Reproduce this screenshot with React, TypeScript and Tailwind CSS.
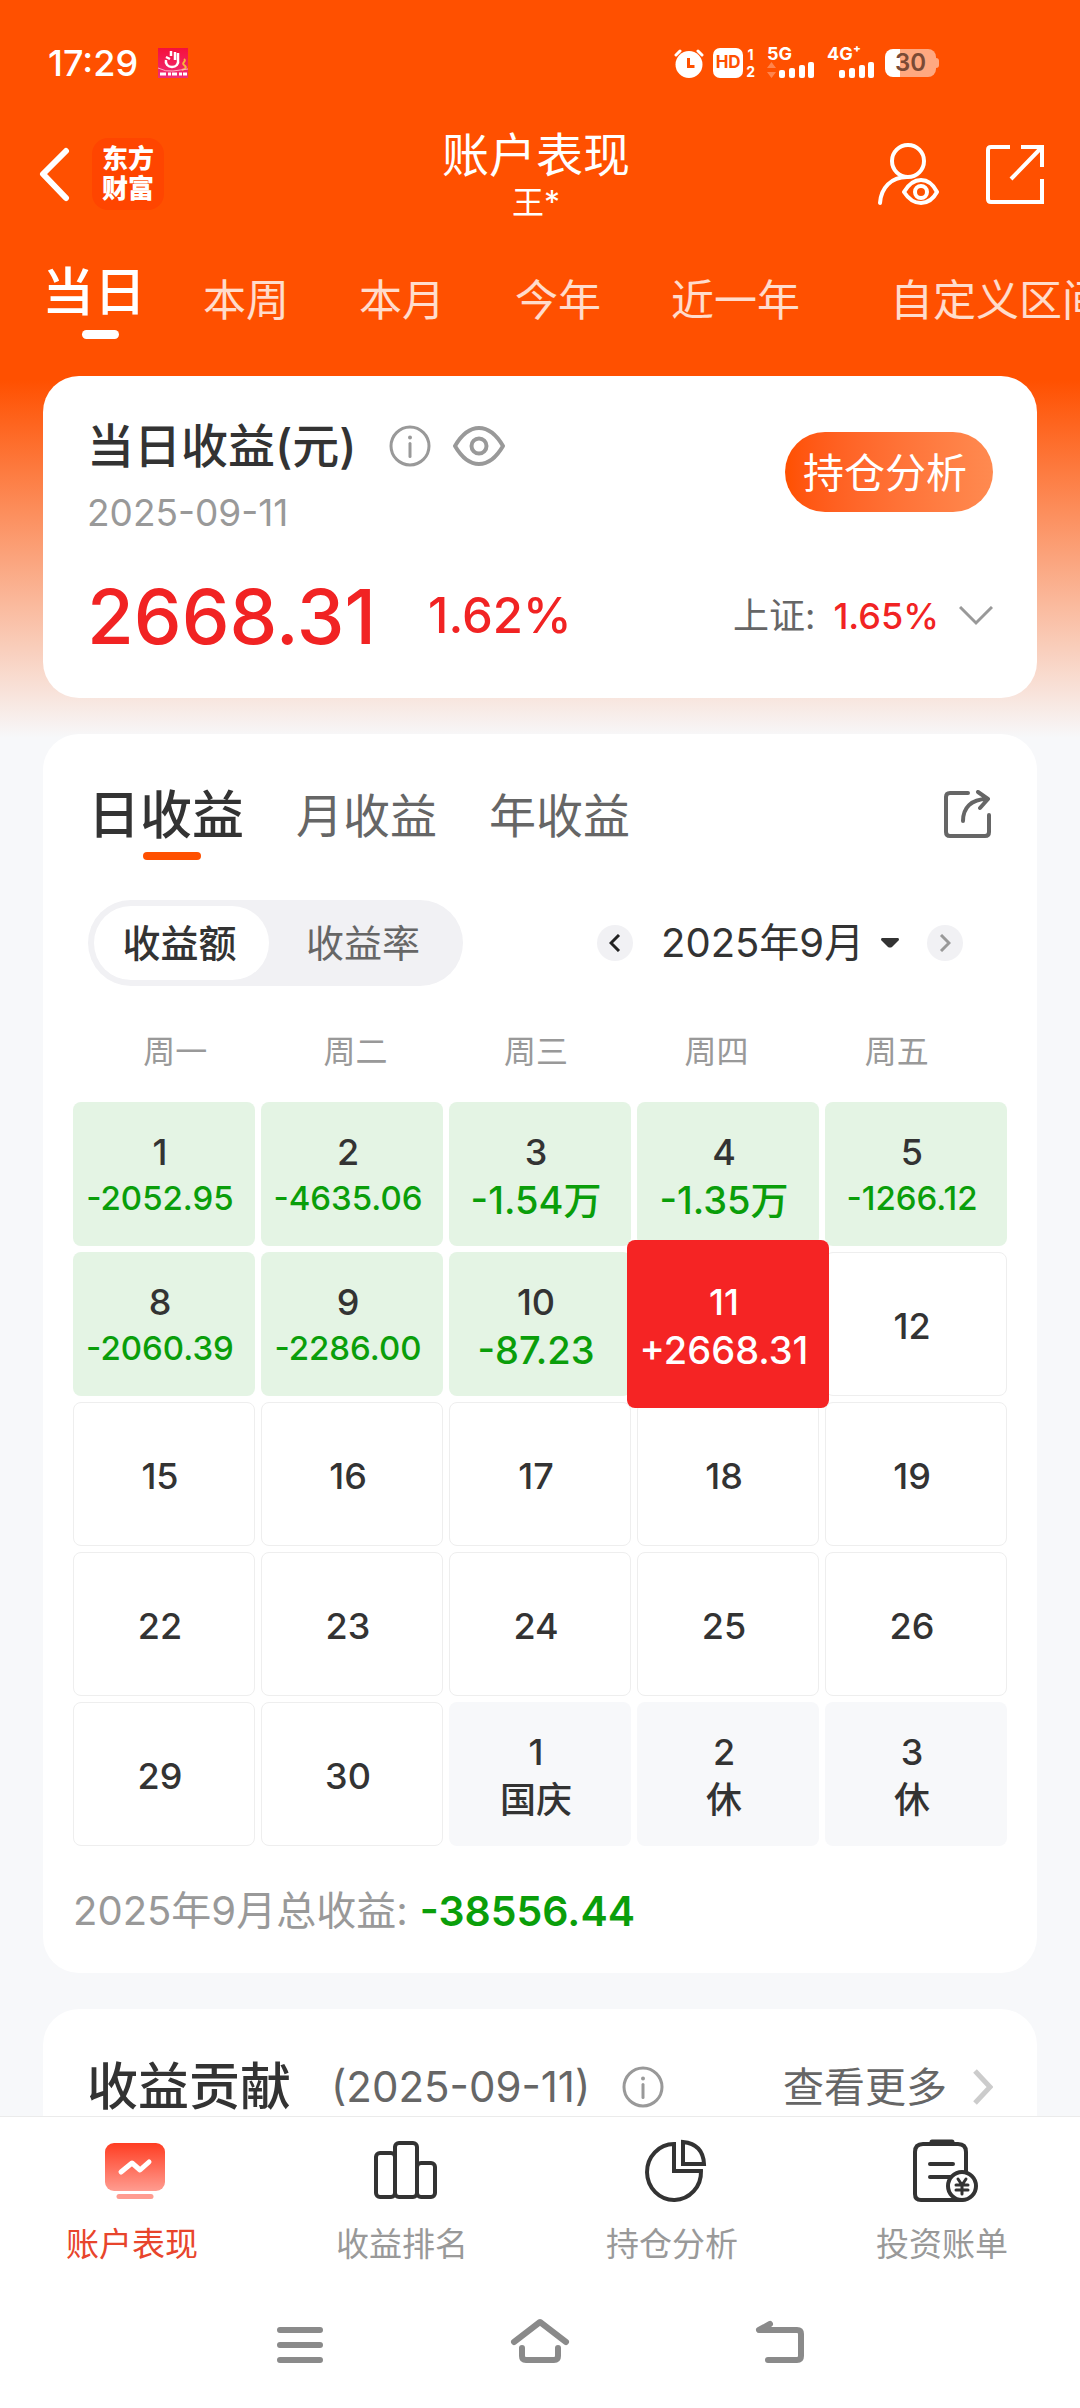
import { useState } from 'react';
import type { ReactNode } from 'react';
import clsx from 'clsx';

const ranges = ['当日', '本周', '本月', '今年', '近一年', '自定义区间'];
const periods = ['日收益', '月收益', '年收益'];
const weekdays = ['周一', '周二', '周三', '周四', '周五'];
const months = ['2025年9月', '2025年8月', '2025年7月'];

interface Day {
  id: string;
  day: number;
  value?: string;
  type: 'loss' | 'gain' | 'empty' | 'holiday';
}

const days: Day[] = [
  { id: '09-01', day: 1, value: '-2052.95', type: 'loss' },
  { id: '09-02', day: 2, value: '-4635.06', type: 'loss' },
  { id: '09-03', day: 3, value: '-1.54万', type: 'loss' },
  { id: '09-04', day: 4, value: '-1.35万', type: 'loss' },
  { id: '09-05', day: 5, value: '-1266.12', type: 'loss' },
  { id: '09-08', day: 8, value: '-2060.39', type: 'loss' },
  { id: '09-09', day: 9, value: '-2286.00', type: 'loss' },
  { id: '09-10', day: 10, value: '-87.23', type: 'loss' },
  { id: '09-11', day: 11, value: '+2668.31', type: 'gain' },
  { id: '09-12', day: 12, type: 'empty' },
  { id: '09-15', day: 15, type: 'empty' },
  { id: '09-16', day: 16, type: 'empty' },
  { id: '09-17', day: 17, type: 'empty' },
  { id: '09-18', day: 18, type: 'empty' },
  { id: '09-19', day: 19, type: 'empty' },
  { id: '09-22', day: 22, type: 'empty' },
  { id: '09-23', day: 23, type: 'empty' },
  { id: '09-24', day: 24, type: 'empty' },
  { id: '09-25', day: 25, type: 'empty' },
  { id: '09-26', day: 26, type: 'empty' },
  { id: '09-29', day: 29, type: 'empty' },
  { id: '09-30', day: 30, type: 'empty' },
  { id: '10-01', day: 1, value: '国庆', type: 'holiday' },
  { id: '10-02', day: 2, value: '休', type: 'holiday' },
  { id: '10-03', day: 3, value: '休', type: 'holiday' },
];

function InfoIcon() {
  return (
    <svg width="42" height="42" viewBox="0 0 42 42" fill="none" stroke="#999" strokeWidth="3">
      <circle cx="21" cy="21" r="19" />
      <path d="M21 18.5v13" strokeLinecap="round" />
      <circle cx="21" cy="12.5" r="2" fill="#999" stroke="none" />
    </svg>
  );
}

function Signal({ label, arrows }: { label: string; arrows?: boolean }) {
  return (
    <div className="flex w-12 flex-col">
      <span className="text-[18px] leading-[14px] font-bold">{label}</span>
      <svg width="48" height="18" viewBox="0 0 48 18" fill="#fff">
        {arrows && <path d="M0 7l4.500-6 4.500 6zM0 11h9l-4.500 6z" opacity=".3" />}
        <rect x="12" y="9" width="6" height="8" rx="2" />
        <rect x="22" y="7" width="6" height="10" rx="2" />
        <rect x="32" y="4" width="6" height="13" rx="2" />
        <rect x="41" y="1" width="6" height="16" rx="2" />
      </svg>
    </div>
  );
}

function StatusBar() {
  return (
    <div className="flex h-[126px] items-center pr-[141px] pl-12">
      <span className="text-[36px] leading-[40px] font-medium">17:29</span>
      <svg className="ml-5" width="30" height="30" viewBox="0 0 30 30">
        <defs>
          <linearGradient id="promo" x1="0" y1="0" x2="0" y2="1">
            <stop offset="0" stopColor="#f5103c" />
            <stop offset="1" stopColor="#f02d78" />
          </linearGradient>
        </defs>
        <rect width="30" height="30" fill="url(#promo)" />
        <path d="M8 12c-1 4 2 7 6 7s7-3 6-7V5M17 12V4M13 8V3M8 9l4 2" fill="none" stroke="#fff" strokeWidth="2.500" />
        <path d="M26 11c3 2-3 4 0 6s2 4-2 5" fill="none" stroke="#f6b53c" strokeWidth="2" />
        <path d="M0 20q8 4 15 3t15-2" fill="none" stroke="#ffb0c0" strokeWidth="1" />
        <path d="M2 26h6M10 26h3M14 26h5M21 26h3M25 26h4" stroke="#fff" strokeWidth="3" />
      </svg>
      <div className="ml-auto flex items-center">
        <svg width="30" height="30" viewBox="0 0 30 30" fill="none">
          <circle cx="15" cy="16.500" r="13.500" fill="#fff" />
          <path d="M2 7l4-4M28 7l-4-4" stroke="#fff" strokeWidth="3" strokeLinecap="round" />
          <path d="M14.500 10v8.500h6" stroke="#ff5000" strokeWidth="3" />
        </svg>
        <span className="ml-[9px] flex h-[30px] w-[30px] items-center justify-center rounded-[7px] bg-white text-[17px] font-bold text-[#ff5000]">
          HD
        </span>
        <span className="ml-[3px] flex flex-col text-center text-[14px] leading-[17px] font-bold">
          <span>1</span>
          <span>2</span>
        </span>
        <div className="ml-3 flex gap-3">
          <Signal label="5G" arrows />
          <Signal label="4G⁺" />
        </div>
        <div className="ml-[10px] flex items-center">
          <span className="flex h-7 w-[51px] items-center justify-center rounded-[8px] bg-linear-to-r from-white from-30% to-[#ffa880] to-30% text-[24px] font-semibold text-[#7a4a35]">
            30
          </span>
          <span className="h-[10px] w-[3px] rounded-r-sm bg-[#ffa880]" />
        </div>
      </div>
    </div>
  );
}

function Header() {
  return (
    <header className="grid h-24 grid-cols-[1fr_auto_1fr] items-center px-9">
      <div className="flex items-center">
        <button aria-label="返回">
          <svg width="36" height="56" viewBox="0 0 36 56" fill="none" stroke="#fff" strokeWidth="6" strokeLinecap="round" strokeLinejoin="round">
            <path d="M30 5L7 28l23 24" />
          </svg>
        </button>
        <div className="ml-5 flex h-[72px] w-[72px] flex-col items-center justify-center rounded-2xl bg-[#ff4500] text-[26px] leading-[30px] font-black">
          <span>东方</span>
          <span>财富</span>
        </div>
      </div>
      <div className="flex flex-col items-center pr-2">
        <h1 className="text-[47px] leading-[58px]">账户表现</h1>
        <span className="text-[32px] leading-[38px]">王*</span>
      </div>
      <div className="flex items-center justify-end gap-[47px]">
        <button aria-label="账户可见">
          <svg width="62" height="62" viewBox="0 0 62 62" fill="none" stroke="#fff" strokeWidth="4" strokeLinecap="round">
            <circle cx="31" cy="18" r="16" />
            <path d="M3 60c1-15 11-26 27-26" />
            <path d="M27 49q7-12 17-12t16 12q-6 11-16 11T27 49z" strokeLinejoin="round" />
            <circle cx="44" cy="49" r="6" />
          </svg>
        </button>
        <button aria-label="分享">
          <svg width="58" height="60" viewBox="0 0 58 60" fill="none" stroke="#fff" strokeWidth="4">
            <path d="M24 3H5q-3 0-3 3v49q0 3 3 3h51V35M35 3h21v20M56 3L25 35" />
          </svg>
        </button>
      </div>
    </header>
  );
}

function RangeTabs() {
  const [active, setActive] = useState(0);

  return (
    <nav className="flex h-[154px] items-start overflow-hidden pt-9 pl-[42px] whitespace-nowrap">
      {ranges.map((r, i) => (
        <button
          key={r}
          onClick={() => setActive(i)}
          className={clsx(
            'shrink-0',
            active === i
              ? 'mr-[22px] flex flex-col items-center text-[52px] leading-[70px] font-medium'
              : 'px-[35px] text-[43px] leading-[84px] text-white/80',
            i === ranges.length - 1 && 'ml-5',
          )}
        >
          {r}
          {active === i && <span className="mt-[2px] ml-3 h-[9px] w-[37px] rounded-full bg-white" />}
        </button>
      ))}
    </nav>
  );
}

function SummaryCard() {
  return (
    <section className="rounded-[36px] bg-white px-11 pt-9 pb-3">
      <div className="flex items-start justify-between">
        <div>
          <div className="flex items-center">
            <h2 className="text-[47px] leading-[68px] font-medium text-[#333]">当日收益(元)</h2>
            <button aria-label="说明" className="ml-8">
              <InfoIcon />
            </button>
            <button aria-label="隐藏金额" className="ml-[22px]">
              <svg width="52" height="42" viewBox="0 0 52 42" fill="none" stroke="#999" strokeWidth="4">
                <path d="M2 21C9 9 17 3 26 3s17 6 24 18c-7 12-15 18-24 18S9 33 2 21z" strokeLinejoin="round" />
                <circle cx="26" cy="21" r="7.500" />
              </svg>
            </button>
          </div>
          <div className="text-[37px] leading-[66px] text-[#999]">2025-09-11</div>
        </div>
        <button className="mt-5 h-20 w-52 rounded-full bg-linear-to-r from-[#ff5000] to-[#ff8a50] pt-1 pr-2 text-[41px]">
          持仓分析
        </button>
      </div>
      <div className="flex h-[140px] items-center text-[#f12323]">
        <span className="text-[76px] leading-[96px] font-medium">2668.31</span>
        <span className="ml-[52px] text-[49px] font-medium">1.62%</span>
        <button className="ml-auto flex items-center text-[36px]">
          <span className="text-[#666]">上证:</span>
          <span className="ml-[18px] font-medium">1.65%</span>
          <svg className="ml-5" width="34" height="20" viewBox="0 0 34 20" fill="none" stroke="#999" strokeWidth="3">
            <path d="M1 1l16 16L33 1" />
          </svg>
        </button>
      </div>
    </section>
  );
}

function DayCell({ item }: { item: Day }) {
  const long = item.type === 'loss' && (item.value?.length ?? 0) > 7;

  return (
    <button
      className={clsx(
        'flex flex-col items-center justify-center rounded-[8px] pt-1 pr-2 font-medium whitespace-nowrap',
        item.type === 'loss' && 'bg-[#e4f4e4]',
        item.type === 'gain' && 'z-10 -mx-[10px] -my-3 bg-[#f52424] text-white',
        item.type === 'empty' && 'border border-[#eee]',
        item.type === 'holiday' && 'bg-[#f7f8fa]',
      )}
    >
      <span className={clsx('text-[36px]', long ? 'leading-[44px]' : 'leading-[48px]')}>{item.day}</span>
      {item.value && (
        <span
          className={clsx(
            'leading-[48px]',
            item.type === 'holiday' ? 'text-[36px]' : long ? 'text-[33px]' : 'text-[38px]',
            item.type === 'loss' && 'text-[#0a9e0a]',
          )}
        >
          {item.value}
        </span>
      )}
    </button>
  );
}

function CalendarCard() {
  const [period, setPeriod] = useState(0);
  const [mode, setMode] = useState<'amount' | 'rate'>('amount');
  const [month, setMonth] = useState(months[0]);

  return (
    <section className="rounded-[36px] bg-white px-[30px] pt-12 pb-[29px]">
      <div className="flex h-[78px] items-start gap-[52px] pr-4 pl-[15px]">
        {periods.map((p, i) => (
          <button
            key={p}
            onClick={() => setPeriod(i)}
            className={clsx(
              'flex flex-col items-center leading-[68px]',
              period === i ? 'text-[52px] font-medium text-[#333]' : 'text-[47px] text-[#666]',
            )}
          >
            {p}
            {period === i && <span className="mt-[2px] ml-3 h-2 w-[58px] rounded-full bg-[#ff5000]" />}
          </button>
        ))}
        <button aria-label="分享收益" className="mt-2 ml-auto">
          <svg width="48" height="48" viewBox="0 0 48 48" fill="none" stroke="#666" strokeWidth="4" strokeLinecap="round">
            <path d="M25 3H7q-4 0-4 4v35q0 4 4 4h35q4 0 4-4V25" />
            <path d="M20 31C20 18 28 9 44 9M35 2l10 7-8 9" strokeLinejoin="round" />
          </svg>
        </button>
      </div>

      <div className="mt-10 flex items-center justify-between pr-11 pl-[15px]">
        <div className="flex h-[86px] w-[375px] rounded-full bg-[#f1f1f4] p-[6px] text-[38px]">
          <button
            onClick={() => setMode('amount')}
            className={clsx(
              'w-[175px] rounded-full pr-1',
              mode === 'amount' ? 'bg-white font-medium text-[#333]' : 'text-[#666]',
            )}
          >
            收益额
          </button>
          <button
            onClick={() => setMode('rate')}
            className={clsx(
              'flex-1 rounded-full',
              mode === 'rate' ? 'bg-white font-medium text-[#333]' : 'text-[#666]',
            )}
          >
            收益率
          </button>
        </div>
        <div className="flex items-center">
          <button aria-label="上个月" className="flex h-9 w-9 items-center justify-center rounded-full bg-[#f1f1f4]">
            <svg width="12" height="18" viewBox="0 0 12 18" fill="none" stroke="#222" strokeWidth="3">
              <path d="M10 1L2 9l8 8" />
            </svg>
          </button>
          <label className="ml-7 flex items-center">
            <select
              aria-label="月份"
              value={month}
              onChange={(e) => setMonth(e.target.value)}
              className="appearance-none bg-transparent text-[40px] leading-[60px] text-[#333]"
            >
              {months.map((m) => (
                <option key={m}>{m}</option>
              ))}
            </select>
            <svg className="pointer-events-none ml-4" width="18" height="10" viewBox="0 0 18 10" fill="#333">
              <path d="M1 0h16q1 0 1 2l-7 7q-2 1-4 0L0 2q0-2 1-2z" />
            </svg>
          </label>
          <button aria-label="下个月" className="ml-7 flex h-9 w-9 items-center justify-center rounded-full bg-[#f1f1f4]">
            <svg width="12" height="18" viewBox="0 0 12 18" fill="none" stroke="#999" strokeWidth="3">
              <path d="M2 1l8 8-8 8" />
            </svg>
          </button>
        </div>
      </div>

      <div className="mt-9 mr-5 ml-3 grid grid-cols-5 text-center text-[32px] leading-[60px] text-[#999]">
        {weekdays.map((w) => (
          <span key={w}>{w}</span>
        ))}
      </div>

      <div className="mt-5 grid auto-rows-[144px] grid-cols-5 gap-[6px] text-[#333]">
        {days.map((d) => (
          <DayCell key={d.id} item={d} />
        ))}
      </div>

      <div className="mt-8 flex items-center text-[40px] leading-[66px] text-[#999]">
        <span>{month}总收益:</span>
        <span className="ml-3 text-[41px] font-semibold text-[#0a9e0a]">-38556.44</span>
      </div>
    </section>
  );
}

function ContributionCard() {
  return (
    <section className="flex h-[300px] items-start rounded-t-[36px] bg-white px-11 pt-11">
      <div className="flex flex-1 items-center leading-[68px]">
        <h2 className="text-[51px] font-medium text-[#333]">收益贡献</h2>
        <span className="ml-10 text-[42px] text-[#666]">(2025-09-11)</span>
        <button aria-label="说明" className="ml-8">
          <InfoIcon />
        </button>
        <a href="#more" className="ml-auto flex items-center text-[41px] text-[#666]">
          查看更多
          <svg className="ml-[26px]" width="20" height="36" viewBox="0 0 20 36" fill="none" stroke="#ccc" strokeWidth="5">
            <path d="M2 2l15 16L2 34" />
          </svg>
        </a>
      </div>
    </section>
  );
}

function NavItem({ label, active, children }: { label: string; active?: boolean; children: ReactNode }) {
  return (
    <a href="#" className="flex flex-col items-center">
      <svg width="66" height="66" viewBox="0 0 66 66" fill="none" stroke="#333" strokeWidth="4" strokeLinejoin="round" strokeLinecap="round">
        {children}
      </svg>
      <span className={clsx('mt-4 pr-[6px] text-[33px] leading-[48px]', active ? 'text-[#e8452c]' : 'text-[#999]')}>
        {label}
      </span>
    </a>
  );
}

function BottomNav() {
  return (
    <nav className="grid grid-cols-4 pt-[21px]">
      <NavItem label="账户表现" active>
        <defs>
          <linearGradient id="screen" x1="0" y1="0" x2="0" y2="1">
            <stop offset="0" stopColor="#ff3d22" />
            <stop offset="1" stopColor="#ff9c90" />
          </linearGradient>
        </defs>
        <rect x="3" y="5" width="60" height="48" rx="9" fill="url(#screen)" stroke="none" />
        <path d="M19 34l11-9 8 7 9-8" stroke="#fff" strokeWidth="5" />
        <path d="M17 58.500h32" stroke="#ff9c90" strokeWidth="5" />
      </NavItem>
      <NavItem label="收益排名">
        <rect x="4" y="15" width="19" height="44" rx="4" />
        <rect x="23" y="5" width="22" height="54" rx="4" />
        <rect x="45" y="25" width="18" height="34" rx="4" />
      </NavItem>
      <NavItem label="持仓分析">
        <path d="M32 6A27 28 0 1 0 59 33H32z" strokeLinejoin="miter" />
        <path d="M41 4v22h21Q61 6 41 4z" strokeLinejoin="miter" />
      </NavItem>
      <NavItem label="投资账单">
        <path d="M54 33V14q0-8-8-8H11q-8 0-8 8v42q0 6 6 6h41" />
        <path d="M20 4h20" strokeWidth="5" />
        <path d="M18 26h23M18 39h20" />
        <circle cx="50" cy="48" r="14" fill="#fff" />
        <path d="M46 41l4 6 4-6M50 47v9M44 47h12M44 52h12" strokeWidth="3" />
      </NavItem>
    </nav>
  );
}

function SystemNav() {
  return (
    <div className="mx-auto grid max-w-[720px] grid-cols-3 justify-items-center pt-[46px] pb-[38px]">
      <button aria-label="最近任务">
        <svg width="60" height="56" viewBox="0 0 60 56" stroke="#8a8a8a" strokeWidth="6" strokeLinecap="round">
          <path d="M10 16h40M10 31h40M10 46h40" />
        </svg>
      </button>
      <button aria-label="主屏幕">
        <svg width="60" height="56" viewBox="0 0 60 56" fill="none" stroke="#8a8a8a" strokeWidth="6" strokeLinecap="round" strokeLinejoin="round">
          <path d="M4 28L30 8l26 20M12 34v8q0 4 4 4h28q4 0 4-4v-8" />
        </svg>
      </button>
      <button aria-label="后退">
        <svg width="60" height="56" viewBox="0 0 60 56" fill="none" stroke="#8a8a8a" strokeWidth="6" strokeLinecap="round" strokeLinejoin="round">
          <path d="M20 10L9 16h38q4 0 4 4v22q0 4-4 4H18" />
        </svg>
      </button>
    </div>
  );
}

export default function App() {
  return (
    <div className="flex h-screen flex-col bg-[#f7f8fa] font-['Inter','Noto_Sans_CJK_SC',sans-serif]">
      <div className="min-h-0 flex-1 overflow-hidden bg-[linear-gradient(to_bottom,#ff5000_380px,#f7f8fa_738px)] text-white">
        <StatusBar />
        <Header />
        <RangeTabs />
        <main className="flex flex-col gap-9 px-[43px]">
          <SummaryCard />
          <CalendarCard />
          <ContributionCard />
        </main>
      </div>
      <footer className="border-t border-[#ebebeb] bg-white">
        <BottomNav />
        <SystemNav />
      </footer>
    </div>
  );
}
